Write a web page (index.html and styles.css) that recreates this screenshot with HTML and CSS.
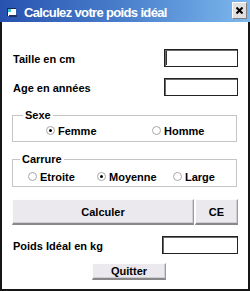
FILE: index.html
```html
<!DOCTYPE html>
<html lang="fr">
<head>
    <meta charset="UTF-8">
    <title>Calculez votre poids idéal</title>
    <link rel="stylesheet" href="styles.css">
</head>
<body>
    <div class="window">
        <div class="titlebar">
            <svg class="app-icon" width="10" height="9" viewBox="0 0 10 9">
                <rect x="0" y="0" width="9" height="8" fill="#1a2a50"/>
                <rect x="1" y="1" width="8" height="7" fill="#ffffff"/>
                <rect x="1" y="1" width="3" height="3" fill="#30c8d8"/>
                <rect x="2" y="7" width="8" height="2" fill="#203060"/>
            </svg>
            <span class="title">Calculez votre poids idéal</span>
            <button class="close-btn">
                <svg width="7" height="7" viewBox="0 0 7 7">
                    <path d="M0.5 0.5 L6.5 6.5 M6.5 0.5 L0.5 6.5" stroke="#000" stroke-width="2"/>
                </svg>
            </button>
        </div>

        <div class="content">
            <!-- saisie -->
            <div class="field-row first">
                <span class="field-label">Taille en cm</span>
                <div class="input-wrap">
                    <input type="text" class="text-input">
                    <span class="caret"></span>
                </div>
            </div>
            <div class="field-row">
                <span class="field-label">Age en années</span>
                <input type="text" class="text-input">
            </div>

            <!-- sexe -->
            <fieldset class="group group-sexe">
                <legend>Sexe</legend>
                <div class="radio-row">
                    <label class="radio w-femme"><span class="dot checked"></span>Femme</label>
                    <label class="radio"><span class="dot"></span>Homme</label>
                </div>
            </fieldset>

            <!-- carrure -->
            <fieldset class="group group-carrure">
                <legend>Carrure</legend>
                <div class="radio-row">
                    <label class="radio w-etroite"><span class="dot"></span>Etroite</label>
                    <label class="radio w-moyenne"><span class="dot checked"></span>Moyenne</label>
                    <label class="radio"><span class="dot"></span>Large</label>
                </div>
            </fieldset>

            <div class="btn-row">
                <button class="btn btn-calc">Calculer</button>
                <button class="btn btn-ce">CE</button>
            </div>

            <div class="field-row result">
                <span class="field-label">Poids Idéal en kg</span>
                <input type="text" class="text-input wide">
            </div>

            <button class="btn btn-quit">Quitter</button>
        </div>
    </div>
</body>
</html>
```

FILE: styles.css
```css
* {
    margin: 0;
    padding: 0;
    box-sizing: border-box;
}

body {
    font-family: 'Liberation Sans', Arial, sans-serif;
    font-size: 11px;
    font-weight: bold;
    color: #000;
    background: #fff;
}

.window {
    width: 250px;
    height: 291px;
    display: flex;
    flex-direction: column;
}

.titlebar {
    height: 22px;
    display: flex;
    align-items: center;
    background: linear-gradient(to right, #2852b0 0%, #4a80cc 50%, #7cb8ee 100%);
    color: #fff;
    padding-left: 7px;
    flex-shrink: 0;
}

.app-icon {
    margin-top: 3px;
}

.title {
    font-size: 13px;
    letter-spacing: -0.65px;
    margin-left: 7px;
    flex: 1;
    margin-top: 2px;
}

.close-btn {
    width: 15px;
    height: 17px;
    margin-right: 3px;
    margin-top: -2px;
    background: #e0e0e0;
    border: 1px solid;
    border-color: #fff #808080 #808080 #fff;
    display: flex;
    align-items: center;
    justify-content: center;
}

.content {
    flex: 1;
    border: 2px solid #161616;
    border-top: none;
    padding: 27px 10px 0 10px;
}

.field-row {
    display: flex;
    justify-content: space-between;
    align-items: center;
    height: 18px;
    margin-top: 11px;
}

.field-row.first {
    margin-top: 0;
}

.field-label {
    margin-left: 1px;
    margin-top: 1px;
}

.input-wrap {
    position: relative;
}

.text-input {
    display: block;
    width: 74px;
    height: 18px;
    border: 1px solid #222;
    box-shadow: inset 1px 1px 0 #6a6a6a;
    background: #fff;
    outline: none;
}

.text-input.wide {
    width: 76px;
}

.caret {
    position: absolute;
    left: 2px;
    top: 2px;
    width: 1px;
    height: 14px;
    background: #333;
}

.group {
    border: 1px solid #c4c4c4;
    margin-right: 1px;
}

.group legend {
    line-height: 13px;
    padding: 0 2px;
}

.group-sexe {
    margin-top: 13px;
    padding: 2px 0 4px 33px;
}

.group-sexe legend {
    margin-left: -23px;
}

.group-carrure {
    margin-top: 11px;
    padding: 4px 0 3px 15px;
}

.group-carrure legend {
    margin-left: -8px;
}

.radio-row {
    display: flex;
    height: 13px;
    align-items: center;
}

.radio {
    display: flex;
    align-items: center;
}

.w-femme {
    width: 106px;
}

.w-etroite {
    width: 69px;
}

.w-moyenne {
    width: 76px;
}

.dot {
    width: 9px;
    height: 9px;
    border: 1px solid #a8a8a8;
    border-radius: 50%;
    background: #fff;
    margin-right: 3px;
    display: flex;
    align-items: center;
    justify-content: center;
}

.dot.checked::after {
    content: "";
    width: 3px;
    height: 3px;
    border-radius: 50%;
    background: #000;
}

.btn {
    font-family: inherit;
    font-size: 11px;
    font-weight: bold;
    color: #000;
    background: #ebe9ed;
    border: 1px solid;
    border-color: #fdfdfd #9a9a9a #888 #fdfdfd;
    border-bottom-width: 2px;
    box-shadow: inset -1px -1px 0 #d0ced2;
}

.btn-row {
    display: flex;
    gap: 1px;
    margin-top: 12px;
    height: 26px;
}

.btn-calc {
    width: 182px;
}

.btn-ce {
    flex: 1;
}

.result {
    margin-top: 11px;
}

.btn-quit {
    display: block;
    width: 74px;
    height: 17px;
    margin: 9px 0 0 80px;
}
```
